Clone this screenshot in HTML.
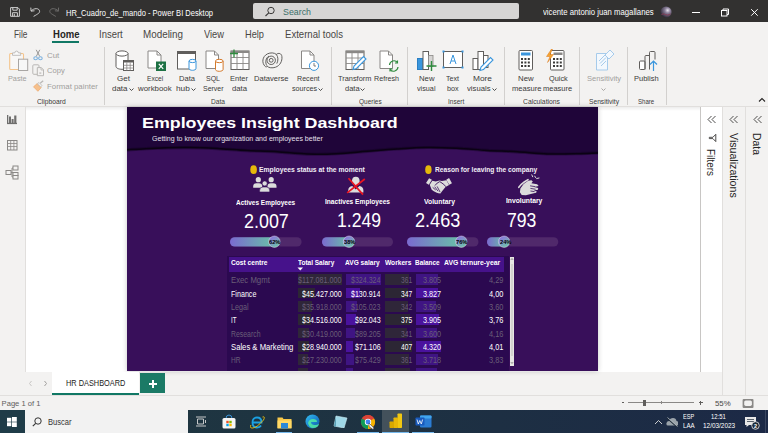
<!DOCTYPE html>
<html><head><meta charset="utf-8">
<style>
*{margin:0;padding:0;box-sizing:border-box}
html,body{width:768px;height:433px;overflow:hidden;background:#f3f2f1;font-family:"Liberation Sans",sans-serif;position:relative}
.a{position:absolute;display:block}
.t{position:absolute;white-space:nowrap;line-height:1}
</style></head><body>
<div class="a" style="left:0px;top:0px;width:768px;height:22px;background:#323130;"></div>
<div class="a" style="left:0px;top:22px;width:768px;height:85px;background:#f3f2f1;"></div>
<div class="a" style="left:0px;top:106px;width:768px;height:1px;background:#e1dfdd;"></div>
<div class="a" style="left:0px;top:107px;width:25px;height:289px;background:#f3f2f1;"></div>
<div class="a" style="left:25px;top:107px;width:1px;height:265px;background:#e1dfdd;"></div>
<div class="a" style="left:26px;top:107px;width:674px;height:265px;background:#ffffff;"></div>
<div class="a" style="left:0px;top:372px;width:700px;height:24px;background:#f3f2f1;"></div>
<div class="a" style="left:700px;top:107px;width:1px;height:265px;background:#c8c6c4;"></div>
<div class="a" style="left:701px;top:107px;width:21px;height:265px;background:#ffffff;"></div>
<div class="a" style="left:701px;top:372px;width:21px;height:24px;background:#f3f2f1;"></div>
<div class="a" style="left:722px;top:107px;width:24px;height:289px;background:#f3f2f1;"></div>
<div class="a" style="left:722px;top:107px;width:1px;height:289px;background:#e1dfdd;"></div>
<div class="a" style="left:745px;top:107px;width:1px;height:289px;background:#e1dfdd;"></div>
<div class="a" style="left:0px;top:395px;width:768px;height:15px;background:#f3f2f1;"></div>
<div class="a" style="left:0px;top:395px;width:768px;height:1px;background:#e1dfdd;"></div>
<div class="a" style="left:0px;top:410px;width:768px;height:23px;background:linear-gradient(90deg,#1f3742 0%,#1e3441 35%,#1d2f43 65%,#1c2946 100%);"></div>
<svg class="a" style="left:0;top:0" width="70" height="22" viewBox="0 0 70 22"><g fill="none" stroke="#d0d0d0" stroke-width="1"><path d="M10.6 7.6h7.3l1.5 1.5v7.2h-8.8z"/><path d="M12.8 7.6v2.6h4.4v-2.6M12.6 16.3v-3.6h4.8v3.6"/><path d="M14.3 13.8v2.4"/></g><g fill="none" stroke="#d0d0d0" stroke-width="1"><path d="M30.8 7.6l.3 3.5l3.4-.3"/><path d="M31.1 11.1C33.5 8 39.6 7.5 39.6 11.6C39.6 12.8 38.5 13.6 33.6 16.4"/></g><g fill="none" stroke="#6c6b6a" stroke-width="1"><path d="M58.6 7.6l-.3 3.5l-3.4-.3"/><path d="M58.3 11.1C55.9 8 49.8 7.5 49.8 11.6C49.8 12.8 50.9 13.6 55.8 16.4"/></g></svg>
<div class="t" style="left:65.80px;top:9.39px;font-size:8.4px;color:#ffffff;font-weight:normal;transform:scaleX(0.9026);transform-origin:0 0;">HR_Cuadro_de_mando - Power BI Desktop</div>
<div class="a" style="left:253px;top:3px;width:266px;height:16px;background:#d6d5d4;border-radius:2px;"></div>
<svg class="a" style="left:264px;top:6px;" width="12" height="11" viewBox="0 0 12 11"><circle cx="7" cy="4.5" r="3.2" fill="none" stroke="#3b3a39" stroke-width="1"/><path d="M4.8 6.8L1.5 10" stroke="#3b3a39" stroke-width="1.1"/></svg>
<div class="t" style="left:283.00px;top:8.32px;font-size:8.6px;color:#3c6f6a;font-weight:normal;transform:scaleX(1.0276);transform-origin:0 0;">Search</div>
<div class="t" style="left:543.00px;top:7.60px;font-size:8.5px;color:#ffffff;font-weight:normal;transform:scaleX(0.9108);transform-origin:0 0;">vicente antonio juan magallanes</div>
<svg class="a" style="left:660px;top:6px;" width="12" height="12" viewBox="0 0 12 12"><defs><radialGradient id="av" cx="65%" cy="35%" r="70%"><stop offset="0" stop-color="#e8e4ee"/><stop offset="0.35" stop-color="#8a7f99"/><stop offset="1" stop-color="#2b2633"/></radialGradient></defs><circle cx="6" cy="6" r="5.6" fill="url(#av)"/><path d="M1.5 8.5q2-1.5 4 0q2 1.5 5-.5" stroke="#8a3a55" stroke-width="0.9" fill="none"/></svg>
<div class="a" style="left:692px;top:12px;width:8px;height:1px;background:#ffffff;"></div>
<svg class="a" style="left:720px;top:8px;" width="10" height="10" viewBox="0 0 10 10"><rect x="1.5" y="2.5" width="5.5" height="5.5" fill="none" stroke="#fff" stroke-width="1"/><path d="M3 2.5v-1.5h5.5v5.5h-1.5" fill="none" stroke="#fff" stroke-width="1"/></svg>
<svg class="a" style="left:750px;top:8px;" width="9" height="9" viewBox="0 0 9 9"><path d="M1.2 1.2l6.5 6.5M7.7 1.2l-6.5 6.5" stroke="#fff" stroke-width="1"/></svg>
<div class="t" style="left:13.60px;top:28.93px;font-size:10.6px;color:#484644;font-weight:normal;transform:scaleX(0.7846);transform-origin:0 0;">File</div>
<div class="t" style="left:52.50px;top:28.93px;font-size:10.6px;color:#252423;font-weight:bold;transform:scaleX(0.8998);transform-origin:0 0;">Home</div>
<div class="t" style="left:98.75px;top:28.93px;font-size:10.6px;color:#484644;font-weight:normal;transform:scaleX(0.8959);transform-origin:0 0;">Insert</div>
<div class="t" style="left:143.00px;top:28.93px;font-size:10.6px;color:#484644;font-weight:normal;transform:scaleX(0.9299);transform-origin:0 0;">Modeling</div>
<div class="t" style="left:204.00px;top:28.93px;font-size:10.6px;color:#484644;font-weight:normal;transform:scaleX(0.8779);transform-origin:0 0;">View</div>
<div class="t" style="left:245.00px;top:28.93px;font-size:10.6px;color:#484644;font-weight:normal;transform:scaleX(0.8716);transform-origin:0 0;">Help</div>
<div class="t" style="left:285.00px;top:28.93px;font-size:10.6px;color:#484644;font-weight:normal;transform:scaleX(0.9031);transform-origin:0 0;">External tools</div>
<div class="a" style="left:52px;top:41px;width:27px;height:2px;background:#117865;"></div>
<div class="a" style="left:104px;top:47px;width:1px;height:58px;background:#d2d0ce;"></div>
<div class="a" style="left:331px;top:47px;width:1px;height:58px;background:#d2d0ce;"></div>
<div class="a" style="left:407px;top:47px;width:1px;height:58px;background:#d2d0ce;"></div>
<div class="a" style="left:504px;top:47px;width:1px;height:58px;background:#d2d0ce;"></div>
<div class="a" style="left:579px;top:47px;width:1px;height:58px;background:#d2d0ce;"></div>
<div class="a" style="left:627px;top:47px;width:1px;height:58px;background:#d2d0ce;"></div>
<div class="a" style="left:666px;top:47px;width:1px;height:58px;background:#d2d0ce;"></div>
<svg class="a" style="left:8px;top:49px;" width="22" height="23" viewBox="0 0 22 23"><rect x="1.7" y="4.5" width="13.8" height="16" rx="1" fill="#f8f7f6" stroke="#f4c48c" stroke-width="1.1"/><path d="M4.5 6.3v-2.4h2.3a1.8 1.8 0 0 1 3.6 0h2.3v2.4z" fill="#fafafa" stroke="#b9b7b5" stroke-width="0.9"/><rect x="10.5" y="10.2" width="9.2" height="11.3" fill="#f7f7f7" stroke="#a8a6a4" stroke-width="1"/></svg>
<div class="t" style="left:7.70px;top:74.60px;font-size:7.8px;color:#a19f9d;font-weight:normal;transform:scaleX(0.9325);transform-origin:0 0;">Paste</div>
<svg class="a" style="left:33px;top:49px;" width="10" height="12" viewBox="0 0 10 12"><path d="M3.2 7.5L6.8 0.8M6.8 7.5L3.2 0.8" stroke="#8f8d8b" stroke-width="0.9"/><ellipse cx="2.6" cy="9.3" rx="1.8" ry="1.5" fill="none" stroke="#7eb2df" stroke-width="1.1"/><ellipse cx="7.4" cy="9.3" rx="1.8" ry="1.5" fill="none" stroke="#7eb2df" stroke-width="1.1"/></svg>
<div class="t" style="left:46.60px;top:51.80px;font-size:7.8px;color:#a19f9d;font-weight:normal;transform:scaleX(1.0134);transform-origin:0 0;">Cut</div>
<svg class="a" style="left:32px;top:64px;" width="13" height="13" viewBox="0 0 13 13"><rect x="0.8" y="0.8" width="6.2" height="9.5" rx="1" fill="#f3f2f1" stroke="#b9b7b5" stroke-width="1"/><path d="M5.3 3.6h4l2.2 2.2v5.9h-6.2z" fill="#f3f2f1" stroke="#b9b7b5" stroke-width="1"/><path d="M9 3.6v2.4h2.4" fill="none" stroke="#b9b7b5" stroke-width="0.8"/><rect x="7.3" y="8.3" width="2" height="1.6" fill="#c8c6c4"/></svg>
<div class="t" style="left:46.60px;top:67.40px;font-size:7.8px;color:#a19f9d;font-weight:normal;transform:scaleX(0.9721);transform-origin:0 0;">Copy</div>
<svg class="a" style="left:32px;top:80px;" width="13" height="12" viewBox="0 0 13 12"><path d="M1.5 6.8l3.7-3.2l4 4l-3.3 3.7z" fill="#f6c08c" stroke="#eea868" stroke-width="0.7"/><path d="M5.4 3.8l1.6-1.3l2.9 2.9l-1.2 1.6z" fill="#f3f2f1" stroke="#b9b7b5" stroke-width="0.8"/><path d="M8.2 3.2l3-2.4" stroke="#b9b7b5" stroke-width="1.3"/></svg>
<div class="t" style="left:46.60px;top:82.90px;font-size:7.8px;color:#a19f9d;font-weight:normal;transform:scaleX(1.0056);transform-origin:0 0;">Format painter</div>
<div class="t" style="left:37.00px;top:98.20px;font-size:7.8px;color:#3b3a39;font-weight:normal;transform:scaleX(0.8627);transform-origin:0 0;">Clipboard</div>
<svg class="a" style="left:114px;top:50px;" width="21" height="22" viewBox="0 0 21 22"><path d="M2 3.5v13c0 1.6 2.8 2.8 6 2.8s6-1.2 6-2.8v-13" fill="#fff" stroke="#605e5c" stroke-width="1"/><ellipse cx="8" cy="3.5" rx="6" ry="2.6" fill="#fff" stroke="#605e5c" stroke-width="1"/><rect x="9.5" y="10.5" width="10" height="10" fill="#fff" stroke="#605e5c" stroke-width="1"/><rect x="9.5" y="10.5" width="10" height="2" fill="#605e5c"/><path d="M9.5 15.3h10M9.5 18h10M12.8 12.5v8M16.2 12.5v8" stroke="#8a8886" stroke-width="0.8"/></svg>
<div class="t" style="left:117.00px;top:74.60px;font-size:7.8px;color:#3b3a39;font-weight:normal;transform:scaleX(1.0341);transform-origin:0 0;">Get</div>
<div class="t" style="left:112.00px;top:85.40px;font-size:7.8px;color:#3b3a39;font-weight:normal;transform:scaleX(1.0211);transform-origin:0 0;">data</div>
<svg class="a" style="left:128.5px;top:88.39999999999999px;" width="5" height="3" viewBox="0 0 5 3"><path d="M0.5 0.5l2 2l2-2" fill="none" stroke="#3b3a39" stroke-width="0.9"/></svg>
<svg class="a" style="left:147px;top:50px;" width="20" height="22" viewBox="0 0 20 22"><path d="M1 1h9l4 4v13h-13z" fill="#fff" stroke="#8a8886" stroke-width="1"/><path d="M10 1v4h4" fill="none" stroke="#8a8886" stroke-width="1"/><rect x="9" y="11.5" width="10" height="9.5" fill="#1d7144"/><path d="M11.8 13.8l4.4 5M16.2 13.8l-4.4 5" stroke="#fff" stroke-width="1.2"/></svg>
<div class="t" style="left:146.60px;top:74.60px;font-size:7.8px;color:#3b3a39;font-weight:normal;transform:scaleX(0.8493);transform-origin:0 0;">Excel</div>
<div class="t" style="left:137.50px;top:85.40px;font-size:7.8px;color:#3b3a39;font-weight:normal;transform:scaleX(1.0066);transform-origin:0 0;">workbook</div>
<svg class="a" style="left:176px;top:50px;" width="22" height="22" viewBox="0 0 22 22"><rect x="1.5" y="1.5" width="18" height="17.5" fill="#fff" stroke="#605e5c" stroke-width="1"/><rect x="1.5" y="1.5" width="18" height="2.5" fill="#605e5c"/><path d="M13 11v7.5c0 1 1.6 1.8 3.5 1.8s3.5-.8 3.5-1.8v-7.5" fill="#fff" stroke="#3a96dd" stroke-width="1"/><ellipse cx="16.5" cy="11" rx="3.5" ry="1.6" fill="#fff" stroke="#3a96dd" stroke-width="1"/></svg>
<div class="t" style="left:179.00px;top:74.60px;font-size:7.8px;color:#3b3a39;font-weight:normal;transform:scaleX(0.9712);transform-origin:0 0;">Data</div>
<div class="t" style="left:176.00px;top:85.40px;font-size:7.8px;color:#3b3a39;font-weight:normal;transform:scaleX(1.0605);transform-origin:0 0;">hub</div>
<svg class="a" style="left:190.8px;top:88.39999999999999px;" width="5" height="3" viewBox="0 0 5 3"><path d="M0.5 0.5l2 2l2-2" fill="none" stroke="#3b3a39" stroke-width="0.9"/></svg>
<svg class="a" style="left:205px;top:50px;" width="20" height="22" viewBox="0 0 20 22"><path d="M1 1h8.5l4 4v13.5h-12.5z" fill="#fff" stroke="#8a8886" stroke-width="1"/><path d="M9.5 1v4h4" fill="none" stroke="#8a8886" stroke-width="1"/><path d="M10.5 11v8.5c0 1 1.7 1.8 3.8 1.8s3.8-.8 3.8-1.8v-8.5" fill="#fff" stroke="#d47a2c" stroke-width="1"/><ellipse cx="14.3" cy="11" rx="3.8" ry="1.7" fill="#fff" stroke="#d47a2c" stroke-width="1"/></svg>
<div class="t" style="left:206.00px;top:74.60px;font-size:7.8px;color:#3b3a39;font-weight:normal;transform:scaleX(0.8970);transform-origin:0 0;">SQL</div>
<div class="t" style="left:202.50px;top:85.40px;font-size:7.8px;color:#3b3a39;font-weight:normal;transform:scaleX(0.8924);transform-origin:0 0;">Server</div>
<svg class="a" style="left:229px;top:49px;" width="21" height="22" viewBox="0 0 21 22"><rect x="2" y="2" width="18" height="18.5" fill="#fff" stroke="#605e5c" stroke-width="1"/><rect x="2" y="2" width="18" height="2" fill="#8a8886"/><path d="M2 8.5h18M2 14.5h18M8 4v16.5M14 4v16.5" stroke="#8a8886" stroke-width="0.9"/><path d="M5 0.5v8M1 4.5h8" stroke="#2e8b3e" stroke-width="1.3"/></svg>
<div class="t" style="left:230.00px;top:74.60px;font-size:7.8px;color:#3b3a39;font-weight:normal;transform:scaleX(0.9656);transform-origin:0 0;">Enter</div>
<div class="t" style="left:232.00px;top:85.40px;font-size:7.8px;color:#3b3a39;font-weight:normal;transform:scaleX(0.9882);transform-origin:0 0;">data</div>
<svg class="a" style="left:256px;top:46px" width="32" height="28" viewBox="256 46 32 28"><g fill="none" stroke="#5a5856" stroke-width="0.95"><path d="M265.2,66.4 C261.6,63.2 262,56.6 267.4,53.9 C270.6,52.4 274.2,52.6 276.3,54.4 C278.6,52.5 281.6,53.4 281.9,56.6 C282.4,61.2 280,65.6 275.6,67.2 C272.2,68.4 268.8,67.8 267.2,66.3 C266.6,67 265.8,67 265.2,66.4 Z"/><circle cx="271.2" cy="60.3" r="4.2"/><circle cx="271.2" cy="60.3" r="1.9"/><path d="M266.8,65.6 C265,62.6 265.6,57.8 269,56.1 M276.3,54.4 C278.3,56.8 278.4,60.6 276.8,63.6"/></g></svg>
<div class="t" style="left:253.80px;top:74.60px;font-size:7.8px;color:#3b3a39;font-weight:normal;transform:scaleX(0.9734);transform-origin:0 0;">Dataverse</div>
<svg class="a" style="left:300px;top:50px;" width="21" height="22" viewBox="0 0 21 22"><path d="M1.5 1h8.5l4 4v13.5h-12.5z" fill="#fff" stroke="#8a8886" stroke-width="1"/><path d="M10 1v4h4" fill="none" stroke="#8a8886" stroke-width="1"/><circle cx="14" cy="15.8" r="4.6" fill="#fff" stroke="#3a96dd" stroke-width="1"/><path d="M14 13v3h2" fill="none" stroke="#605e5c" stroke-width="0.8"/></svg>
<div class="t" style="left:296.70px;top:74.60px;font-size:7.8px;color:#3b3a39;font-weight:normal;transform:scaleX(0.9145);transform-origin:0 0;">Recent</div>
<div class="t" style="left:291.70px;top:85.40px;font-size:7.8px;color:#3b3a39;font-weight:normal;transform:scaleX(0.9191);transform-origin:0 0;">sources</div>
<svg class="a" style="left:317.8px;top:88.39999999999999px;" width="5" height="3" viewBox="0 0 5 3"><path d="M0.5 0.5l2 2l2-2" fill="none" stroke="#3b3a39" stroke-width="0.9"/></svg>
<svg class="a" style="left:345px;top:50px;" width="22" height="21" viewBox="0 0 22 21"><rect x="1" y="1" width="18" height="18.5" fill="#fff" stroke="#605e5c" stroke-width="1"/><rect x="1" y="1" width="18" height="2.2" fill="#8a8886"/><path d="M1 8h18M1 13.5h18M7 3v16.5M13 3v16.5" stroke="#8a8886" stroke-width="0.9"/><path d="M8 19.5l1-3.5l9.5-9.5l2.5 2.5l-9.5 9.5z" fill="#fff" stroke="#3a96dd" stroke-width="1.1"/></svg>
<div class="t" style="left:211.00px;top:98.20px;font-size:7.8px;color:#3b3a39;font-weight:normal;transform:scaleX(0.8498);transform-origin:0 0;">Data</div>
<div class="t" style="left:338.40px;top:74.60px;font-size:7.8px;color:#3b3a39;font-weight:normal;transform:scaleX(0.9476);transform-origin:0 0;">Transform</div>
<div class="t" style="left:344.50px;top:85.40px;font-size:7.8px;color:#3b3a39;font-weight:normal;transform:scaleX(0.9618);transform-origin:0 0;">data</div>
<svg class="a" style="left:360.1px;top:88.39999999999999px;" width="5" height="3" viewBox="0 0 5 3"><path d="M0.5 0.5l2 2l2-2" fill="none" stroke="#3b3a39" stroke-width="0.9"/></svg>
<svg class="a" style="left:379px;top:50px;" width="22" height="22" viewBox="0 0 22 22"><path d="M1 1h8.5l4 4v13.5h-12.5z" fill="#fff" stroke="#8a8886" stroke-width="1"/><path d="M9.5 1v4h4" fill="none" stroke="#8a8886" stroke-width="1"/><path d="M10.5 15a4.5 4.5 0 0 1 8-2.5M19 17a4.5 4.5 0 0 1-8 2.5" fill="none" stroke="#2e8b3e" stroke-width="1.2"/><path d="M18.5 10.5v2.5h-2.5M11 21.5v-2.5h2.5" fill="none" stroke="#2e8b3e" stroke-width="1.1"/></svg>
<div class="t" style="left:374.40px;top:74.60px;font-size:7.8px;color:#3b3a39;font-weight:normal;transform:scaleX(0.9191);transform-origin:0 0;">Refresh</div>
<div class="t" style="left:358.75px;top:98.20px;font-size:7.8px;color:#3b3a39;font-weight:normal;transform:scaleX(0.8294);transform-origin:0 0;">Queries</div>
<svg class="a" style="left:416px;top:50px;" width="22" height="22" viewBox="0 0 22 22"><rect x="1.5" y="8.5" width="5.5" height="11" fill="#3a96dd" stroke="#2a7fc4" stroke-width="1"/><rect x="7" y="1.5" width="5.5" height="18" fill="#fff" stroke="#605e5c" stroke-width="1"/><rect x="12.5" y="5.5" width="4.5" height="11" fill="#d6d5d4" stroke="#8a8886" stroke-width="0.8"/><path d="M15.5 11v10M10.5 16h10" stroke="#2e8b3e" stroke-width="1.4"/></svg>
<div class="t" style="left:418.50px;top:74.60px;font-size:7.8px;color:#3b3a39;font-weight:normal;transform:scaleX(0.9934);transform-origin:0 0;">New</div>
<div class="t" style="left:416.50px;top:85.40px;font-size:7.8px;color:#3b3a39;font-weight:normal;transform:scaleX(0.9278);transform-origin:0 0;">visual</div>
<svg class="a" style="left:442px;top:50px;" width="22" height="20" viewBox="0 0 22 20"><rect x="1.5" y="1.5" width="19" height="16" fill="#fff" stroke="#605e5c" stroke-width="1"/><rect x="0.5" y="0.5" width="2" height="2" fill="#3a96dd"/><rect x="19.5" y="0.5" width="2" height="2" fill="#3a96dd"/><rect x="0.5" y="16.5" width="2" height="2" fill="#3a96dd"/><rect x="19.5" y="16.5" width="2" height="2" fill="#3a96dd"/><path d="M8 14l3-9l3 9M9 11h4" fill="none" stroke="#3a96dd" stroke-width="1"/></svg>
<div class="t" style="left:446.40px;top:74.60px;font-size:7.8px;color:#3b3a39;font-weight:normal;transform:scaleX(0.9088);transform-origin:0 0;">Text</div>
<div class="t" style="left:447.00px;top:85.40px;font-size:7.8px;color:#3b3a39;font-weight:normal;transform:scaleX(0.9225);transform-origin:0 0;">box</div>
<svg class="a" style="left:472px;top:50px;" width="22" height="22" viewBox="0 0 22 22"><rect x="1" y="8.5" width="5" height="11" fill="#fff" stroke="#605e5c" stroke-width="1"/><rect x="6" y="1.5" width="5.5" height="18" fill="#fff" stroke="#605e5c" stroke-width="1"/><rect x="11.5" y="5.5" width="4.5" height="12" fill="#fff" stroke="#605e5c" stroke-width="1"/><path d="M8 20.5l1-3.5l9.5-9.5l2.5 2.5l-9.5 9.5z" fill="#fff" stroke="#3a96dd" stroke-width="1.1"/></svg>
<div class="t" style="left:473.00px;top:74.60px;font-size:7.8px;color:#3b3a39;font-weight:normal;transform:scaleX(1.0693);transform-origin:0 0;">More</div>
<div class="t" style="left:467.00px;top:85.40px;font-size:7.8px;color:#3b3a39;font-weight:normal;transform:scaleX(0.9857);transform-origin:0 0;">visuals</div>
<svg class="a" style="left:491.5px;top:88.39999999999999px;" width="5" height="3" viewBox="0 0 5 3"><path d="M0.5 0.5l2 2l2-2" fill="none" stroke="#3b3a39" stroke-width="0.9"/></svg>
<div class="t" style="left:447.70px;top:98.20px;font-size:7.8px;color:#3b3a39;font-weight:normal;transform:scaleX(0.8305);transform-origin:0 0;">Insert</div>
<svg class="a" style="left:518px;top:50px;" width="16" height="21" viewBox="0 0 16 21"><rect x="1" y="0.5" width="13.5" height="19.5" rx="1" fill="#fff" stroke="#605e5c" stroke-width="1"/><rect x="3" y="2.5" width="9.5" height="3" fill="#3a96dd"/><rect x="3.0" y="8.0" width="2" height="2" fill="#3b3a39"/><rect x="6.4" y="8.0" width="2" height="2" fill="#3b3a39"/><rect x="9.8" y="8.0" width="2" height="2" fill="#3b3a39"/><rect x="3.0" y="11.5" width="2" height="2" fill="#3b3a39"/><rect x="6.4" y="11.5" width="2" height="2" fill="#3b3a39"/><rect x="9.8" y="11.5" width="2" height="2" fill="#3b3a39"/><rect x="3.0" y="15.0" width="2" height="2" fill="#3b3a39"/><rect x="6.4" y="15.0" width="2" height="2" fill="#3b3a39"/><rect x="9.8" y="15.0" width="2" height="2" fill="#3b3a39"/></svg>
<div class="t" style="left:518.00px;top:74.60px;font-size:7.8px;color:#3b3a39;font-weight:normal;">New</div>
<div class="t" style="left:511.50px;top:85.40px;font-size:7.8px;color:#3b3a39;font-weight:normal;transform:scaleX(0.9722);transform-origin:0 0;">measure</div>
<svg class="a" style="left:546px;top:49px;" width="20" height="23" viewBox="0 0 20 23"><rect x="4.5" y="1.5" width="13.5" height="19.5" rx="1" fill="#fff" stroke="#605e5c" stroke-width="1"/><rect x="7.5" y="3.5" width="9" height="2.5" fill="#8a8886"/><rect x="7.0" y="9.0" width="2" height="2" fill="#3b3a39"/><rect x="10.4" y="9.0" width="2" height="2" fill="#3b3a39"/><rect x="13.8" y="9.0" width="2" height="2" fill="#3b3a39"/><rect x="7.0" y="12.5" width="2" height="2" fill="#3b3a39"/><rect x="10.4" y="12.5" width="2" height="2" fill="#3b3a39"/><rect x="13.8" y="12.5" width="2" height="2" fill="#3b3a39"/><rect x="7.0" y="16.0" width="2" height="2" fill="#3b3a39"/><rect x="10.4" y="16.0" width="2" height="2" fill="#3b3a39"/><rect x="13.8" y="16.0" width="2" height="2" fill="#3b3a39"/><path d="M5.5 0l-5 7.5h3.5l-2.5 6l6-8h-3.5l2.5-5.5z" fill="#f7a531" stroke="#d9781e" stroke-width="0.5"/></svg>
<div class="t" style="left:548.75px;top:74.60px;font-size:7.8px;color:#3b3a39;font-weight:normal;transform:scaleX(0.9404);transform-origin:0 0;">Quick</div>
<div class="t" style="left:542.80px;top:85.40px;font-size:7.8px;color:#3b3a39;font-weight:normal;transform:scaleX(0.9623);transform-origin:0 0;">measure</div>
<div class="t" style="left:523.00px;top:98.20px;font-size:7.8px;color:#3b3a39;font-weight:normal;transform:scaleX(0.8709);transform-origin:0 0;">Calculations</div>
<svg class="a" style="left:595px;top:49px;" width="20" height="22" viewBox="0 0 20 22"><path d="M1.5 4.5h11v16.5h-11z" fill="#f3f8fd" stroke="#a6cbeb" stroke-width="1"/><path d="M4 12l6-6M5 14.5l6-6M6 17l5-5" stroke="#a6cbeb" stroke-width="1"/><path d="M10 6l5-5l4 4l-5 5z" fill="#f3f8fd" stroke="#a6cbeb" stroke-width="1"/></svg>
<div class="t" style="left:586.75px;top:74.60px;font-size:7.8px;color:#a19f9d;font-weight:normal;transform:scaleX(0.9726);transform-origin:0 0;">Sensitivity</div>
<svg class="a" style="left:600.5px;top:87.5px;" width="5" height="3" viewBox="0 0 5 3"><path d="M0.5 0.5l2 2l2-2" fill="none" stroke="#a19f9d" stroke-width="0.9"/></svg>
<div class="t" style="left:588.80px;top:98.20px;font-size:7.8px;color:#3b3a39;font-weight:normal;transform:scaleX(0.8544);transform-origin:0 0;">Sensitivity</div>
<svg class="a" style="left:638px;top:50px;" width="22" height="22" viewBox="0 0 22 22"><rect x="1.5" y="11" width="5.5" height="8.5" rx="1" fill="#fff" stroke="#605e5c" stroke-width="1"/><path d="M7 19.5v-13a1 1 0 0 1 1-1h3.5" fill="none" stroke="#605e5c" stroke-width="1"/><path d="M11.5 19.5v-17a1 1 0 0 1 1-1h3.5a1 1 0 0 1 1 1v7" fill="none" stroke="#605e5c" stroke-width="1"/><path d="M15.5 21v-10M12 14.5l3.5-3.5l3.5 3.5" fill="none" stroke="#3a96dd" stroke-width="1.2"/></svg>
<div class="t" style="left:634.40px;top:74.60px;font-size:7.8px;color:#3b3a39;font-weight:normal;transform:scaleX(0.9616);transform-origin:0 0;">Publish</div>
<div class="t" style="left:638.30px;top:98.20px;font-size:7.8px;color:#3b3a39;font-weight:normal;transform:scaleX(0.7784);transform-origin:0 0;">Share</div>
<svg class="a" style="left:758px;top:97px;" width="8" height="6" viewBox="0 0 8 6"><path d="M1 4.5l3-3l3 3" fill="none" stroke="#252423" stroke-width="1.1"/></svg>
<div class="a" style="left:127px;top:107px;width:471px;height:264px;background:#380f5a;box-shadow:0 0 5px rgba(0,0,0,0.22);"></div>
<div class="a" style="left:26px;top:107px;width:674px;height:4px;background:linear-gradient(rgba(0,0,0,0.07),rgba(0,0,0,0));"></div>
<svg class="a" style="left:127px;top:107px;" width="471" height="60" viewBox="0 0 471 60"><defs><filter id="bl" x="-5%" y="-50%" width="110%" height="200%"><feGaussianBlur stdDeviation="0.9"/></filter></defs><path d="M-2,42.9 C-1.7,42.9 -5.3,43.1 0.0,42.8 C5.3,42.5 20.0,41.6 30.0,41.2 C40.0,40.9 50.0,40.5 60.0,40.6 C70.0,40.7 80.0,41.1 90.0,41.6 C100.0,42.1 110.0,43.1 120.0,43.6 C130.0,44.1 140.0,44.2 150.0,44.8 C160.0,45.4 170.0,46.8 180.0,47.1 C190.0,47.4 200.0,47.2 210.0,46.7 C220.0,46.2 230.0,45.1 240.0,44.3 C250.0,43.5 260.0,42.5 270.0,41.9 C280.0,41.3 290.0,40.6 300.0,40.5 C310.0,40.4 320.0,40.8 330.0,41.2 C340.0,41.7 350.0,42.8 360.0,43.4 C370.0,44.0 380.0,44.2 390.0,44.8 C400.0,45.4 410.0,46.6 420.0,46.9 C430.0,47.2 441.5,46.9 450.0,46.7 C458.5,46.5 467.2,46.0 471.0,45.9 C474.8,45.8 472.7,45.8 473.0,45.8 L473,-2 L-2,-2 Z" fill="#1f0539"/><path d="M-2,42.9 C-1.7,42.9 -5.3,43.1 0.0,42.8 C5.3,42.5 20.0,41.6 30.0,41.2 C40.0,40.9 50.0,40.5 60.0,40.6 C70.0,40.7 80.0,41.1 90.0,41.6 C100.0,42.1 110.0,43.1 120.0,43.6 C130.0,44.1 140.0,44.2 150.0,44.8 C160.0,45.4 170.0,46.8 180.0,47.1 C190.0,47.4 200.0,47.2 210.0,46.7 C220.0,46.2 230.0,45.1 240.0,44.3 C250.0,43.5 260.0,42.5 270.0,41.9 C280.0,41.3 290.0,40.6 300.0,40.5 C310.0,40.4 320.0,40.8 330.0,41.2 C340.0,41.7 350.0,42.8 360.0,43.4 C370.0,44.0 380.0,44.2 390.0,44.8 C400.0,45.4 410.0,46.6 420.0,46.9 C430.0,47.2 441.5,46.9 450.0,46.7 C458.5,46.5 467.2,46.0 471.0,45.9 C474.8,45.8 472.7,45.8 473.0,45.8" fill="none" stroke="#12041f" stroke-opacity="0.45" stroke-width="3.2"/><path d="M-2,42.9 C-1.7,42.9 -5.3,43.1 0.0,42.8 C5.3,42.5 20.0,41.6 30.0,41.2 C40.0,40.9 50.0,40.5 60.0,40.6 C70.0,40.7 80.0,41.1 90.0,41.6 C100.0,42.1 110.0,43.1 120.0,43.6 C130.0,44.1 140.0,44.2 150.0,44.8 C160.0,45.4 170.0,46.8 180.0,47.1 C190.0,47.4 200.0,47.2 210.0,46.7 C220.0,46.2 230.0,45.1 240.0,44.3 C250.0,43.5 260.0,42.5 270.0,41.9 C280.0,41.3 290.0,40.6 300.0,40.5 C310.0,40.4 320.0,40.8 330.0,41.2 C340.0,41.7 350.0,42.8 360.0,43.4 C370.0,44.0 380.0,44.2 390.0,44.8 C400.0,45.4 410.0,46.6 420.0,46.9 C430.0,47.2 441.5,46.9 450.0,46.7 C458.5,46.5 467.2,46.0 471.0,45.9 C474.8,45.8 472.7,45.8 473.0,45.8" fill="none" stroke="#0b0214" stroke-width="1.5"/></svg>
<div class="t" style="left:141.60px;top:114.96px;font-size:15.4px;color:#ffffff;font-weight:bold;transform:scaleX(1.1587);transform-origin:0 0;">Employees Insight Dashboard</div>
<div class="t" style="left:151.80px;top:135.61px;font-size:6.6px;color:#e6e0ec;font-weight:normal;transform:scaleX(1.0665);transform-origin:0 0;">Getting to know our organization and employees better</div>
<svg class="a" style="left:250px;top:165px;" width="8" height="10" viewBox="0 0 8 10"><ellipse cx="3.6" cy="4.7" rx="3.3" ry="4.4" fill="#e5b80b"/></svg>
<div class="t" style="left:258.70px;top:166.27px;font-size:7.6px;color:#f2eef6;font-weight:bold;transform:scaleX(0.8924);transform-origin:0 0;">Employees status at the moment</div>
<svg class="a" style="left:425px;top:165px;" width="8" height="10" viewBox="0 0 8 10"><ellipse cx="3.4" cy="4.7" rx="3.2" ry="4.4" fill="#e5b80b"/></svg>
<div class="t" style="left:434.70px;top:166.27px;font-size:7.6px;color:#f2eef6;font-weight:bold;transform:scaleX(0.8745);transform-origin:0 0;">Reason for leaving the company</div>
<svg class="a" style="left:252px;top:176px;" width="26" height="18" viewBox="0 0 26 18"><g fill="#dcdcdc"><circle cx="6.3" cy="3.7" r="2.6"/><circle cx="19.2" cy="3.7" r="2.6"/><path d="M1.2 11.7v-1.2q0-3.2 3.2-3.2h2.6q3.2 0 3.2 3.2v1.2z"/><path d="M15.5 11.7v-1.2q0-3.2 3.2-3.2h2.6q3.2 0 3.2 3.2v1.2z"/><circle cx="12.7" cy="7.4" r="2.5" stroke="#380f5a" stroke-width="0.6"/><path d="M7.6 16v-1.6q0-3.4 3.4-3.4h3.3q3.4 0 3.4 3.4v1.6z" stroke="#380f5a" stroke-width="0.6"/></g></svg>
<svg class="a" style="left:346px;top:176px;" width="20" height="20" viewBox="0 0 20 20"><g fill="#dcdcdc"><ellipse cx="9.8" cy="5" rx="3.8" ry="4.3"/><path d="M2.2 16.5v-2q0-4 4-4.5l3.6 3.5l3.6-3.5q4 .5 4 4.5v2z"/></g><path d="M2.5 2.3L17 18.6M18.8 3L1.1 16.9" stroke="#ea1520" stroke-width="1.7"/></svg>
<svg class="a" style="left:0;top:0" width="768" height="433" viewBox="0 0 768 433"><polygon points="426.01,183.11 429.13,178.19 431.89,179.81 428.83,184.79" fill="#dcdcdc"/><polygon points="446.25,179.69 449.07,178.01 451.95,183.17 449.25,184.85" fill="#dcdcdc"/><polygon points="429.73,184.79 432.31,180.71 435.74,181.61 439.52,180.41 441.92,180.89 446.43,180.23 449.07,184.91 445.53,186.89 442.22,191.10 440.42,193.62 438.32,193.14 436.22,192.42 433.81,191.22 431.71,189.72 430.81,187.62" fill="#dcdcdc"/><polyline points="435.02,185.51 437.12,183.11 439.82,181.61 443.72,184.31 445.83,186.71" fill="none" stroke="#380f5a" stroke-width="0.9"/><polyline points="432.61,187.32 435.74,190.02" fill="none" stroke="#380f5a" stroke-width="0.8"/><polyline points="434.71,186.71 438.02,191.22" fill="none" stroke="#380f5a" stroke-width="0.8"/><polyline points="437.12,186.41 440.12,192.12" fill="none" stroke="#380f5a" stroke-width="0.8"/></svg>
<svg class="a" style="left:0;top:0" width="768" height="433" viewBox="0 0 768 433"><g><polygon points="520.40,188.42 523.64,183.90 528.16,180.86 531.39,180.21 532.81,181.51 531.39,183.25 537.21,184.35 538.63,186.03 534.30,186.94 538.18,187.97 537.99,189.72 533.65,190.56 536.89,191.46 536.05,192.75 530.75,194.05 525.90,195.34 521.70,195.08 519.89,192.30" fill="#dcdcdc"/><polyline points="518.79,187.32 521.05,184.54 524.28,181.96 528.03,179.57" fill="none" stroke="#dcdcdc" stroke-width="1.6" stroke-linecap="round"/><polyline points="530.10,185.84 535.27,186.68" fill="none" stroke="#380f5a" stroke-width="0.8"/><polyline points="530.42,188.42 535.59,189.26" fill="none" stroke="#380f5a" stroke-width="0.8"/><polyline points="530.42,191.01 534.62,191.65" fill="none" stroke="#380f5a" stroke-width="0.8"/><polyline points="531.84,174.85 532.69,176.79" fill="none" stroke="#dcdcdc" stroke-width="1" stroke-linecap="round"/><polyline points="534.75,176.14 535.66,177.56" fill="none" stroke="#dcdcdc" stroke-width="1" stroke-linecap="round"/><polyline points="536.69,178.53 539.02,178.02" fill="none" stroke="#dcdcdc" stroke-width="1" stroke-linecap="round"/></g></svg>
<div class="t" style="left:236.00px;top:199.27px;font-size:7.0px;color:#ffffff;font-weight:bold;transform:scaleX(0.9261);transform-origin:0 0;">Actives Employees</div>
<div class="t" style="left:325.00px;top:197.87px;font-size:7.0px;color:#ffffff;font-weight:bold;transform:scaleX(0.9437);transform-origin:0 0;">Inactives Employees</div>
<div class="t" style="left:424.00px;top:197.87px;font-size:7.0px;color:#ffffff;font-weight:bold;transform:scaleX(0.9758);transform-origin:0 0;">Voluntary</div>
<div class="t" style="left:505.50px;top:197.47px;font-size:7.0px;color:#ffffff;font-weight:bold;transform:scaleX(0.9620);transform-origin:0 0;">Involuntary</div>
<div class="t" style="left:244.30px;top:211.37px;font-size:20px;color:#ffffff;font-weight:normal;transform:scaleX(0.8951);transform-origin:0 0;">2.007</div>
<div class="t" style="left:336.50px;top:210.47px;font-size:20px;color:#ffffff;font-weight:normal;transform:scaleX(0.8791);transform-origin:0 0;">1.249</div>
<div class="t" style="left:414.50px;top:210.47px;font-size:20px;color:#ffffff;font-weight:normal;transform:scaleX(0.9051);transform-origin:0 0;">2.463</div>
<div class="t" style="left:506.60px;top:210.47px;font-size:20px;color:#ffffff;font-weight:normal;transform:scaleX(0.8810);transform-origin:0 0;">793</div>
<svg class="a" style="left:229px;top:234px;" width="79.60000000000002" height="15" viewBox="0 0 79.60000000000002 15"><defs><linearGradient id="g1" x1="0" x2="1"><stop offset="0" stop-color="#7b6ad0"/><stop offset="1" stop-color="#68c3a6"/></linearGradient><linearGradient id="k1" x1="0" y1="0" x2="0.7" y2="1"><stop offset="0.2" stop-color="#8b78dc"/><stop offset="1" stop-color="#6cc6a8"/></linearGradient></defs><rect x="1" y="3.2" width="71.60000000000002" height="9.4" rx="4.7" fill="#50296b"/><rect x="1" y="3.2" width="45.4" height="9.4" rx="4.7" fill="url(#g1)"/><circle cx="45.4" cy="7.7" r="5.7" fill="url(#k1)" stroke="#e8e0f0" stroke-opacity="0.8" stroke-width="0.6"/></svg>
<div class="t" style="left:269.49px;top:239.05px;font-size:6.2px;color:#000000;font-weight:bold;transform:scaleX(0.9187);transform-origin:0 0;">62%</div>
<svg class="a" style="left:321px;top:234px;" width="79" height="15" viewBox="0 0 79 15"><defs><linearGradient id="g2" x1="0" x2="1"><stop offset="0" stop-color="#7b6ad0"/><stop offset="1" stop-color="#68c3a6"/></linearGradient><linearGradient id="k2" x1="0" y1="0" x2="0.7" y2="1"><stop offset="0.2" stop-color="#8b78dc"/><stop offset="1" stop-color="#6cc6a8"/></linearGradient></defs><rect x="1" y="3.2" width="71" height="9.4" rx="4.7" fill="#50296b"/><rect x="1" y="3.2" width="28.0" height="9.4" rx="4.7" fill="url(#g2)"/><circle cx="28.0" cy="7.7" r="5.7" fill="url(#k2)" stroke="#e8e0f0" stroke-opacity="0.8" stroke-width="0.6"/></svg>
<div class="t" style="left:344.08px;top:239.05px;font-size:6.2px;color:#000000;font-weight:bold;transform:scaleX(0.9187);transform-origin:0 0;">38%</div>
<svg class="a" style="left:406px;top:234px;" width="79.5" height="15" viewBox="0 0 79.5 15"><defs><linearGradient id="g3" x1="0" x2="1"><stop offset="0" stop-color="#7b6ad0"/><stop offset="1" stop-color="#68c3a6"/></linearGradient><linearGradient id="k3" x1="0" y1="0" x2="0.7" y2="1"><stop offset="0.2" stop-color="#8b78dc"/><stop offset="1" stop-color="#6cc6a8"/></linearGradient></defs><rect x="1" y="3.2" width="71.5" height="9.4" rx="4.7" fill="#50296b"/><rect x="1" y="3.2" width="55.3" height="9.4" rx="4.7" fill="url(#g3)"/><circle cx="55.3" cy="7.7" r="5.7" fill="url(#k3)" stroke="#e8e0f0" stroke-opacity="0.8" stroke-width="0.6"/></svg>
<div class="t" style="left:456.44px;top:239.05px;font-size:6.2px;color:#000000;font-weight:bold;transform:scaleX(0.9187);transform-origin:0 0;">76%</div>
<svg class="a" style="left:486.3px;top:234px;" width="79.30000000000001" height="15" viewBox="0 0 79.30000000000001 15"><defs><linearGradient id="g4" x1="0" x2="1"><stop offset="0" stop-color="#7b6ad0"/><stop offset="1" stop-color="#68c3a6"/></linearGradient><linearGradient id="k4" x1="0" y1="0" x2="0.7" y2="1"><stop offset="0.2" stop-color="#8b78dc"/><stop offset="1" stop-color="#6cc6a8"/></linearGradient></defs><rect x="1" y="3.2" width="71.30000000000001" height="9.4" rx="4.7" fill="#50296b"/><rect x="1" y="3.2" width="18.1" height="9.4" rx="4.7" fill="url(#g4)"/><circle cx="18.1" cy="7.7" r="5.7" fill="url(#k4)" stroke="#e8e0f0" stroke-opacity="0.8" stroke-width="0.6"/></svg>
<div class="t" style="left:499.51px;top:239.05px;font-size:6.2px;color:#000000;font-weight:bold;transform:scaleX(0.9187);transform-origin:0 0;">24%</div>
<div class="a" style="left:227px;top:256px;width:282px;height:115px;background:#2b0950;"></div>
<div class="a" style="left:228.5px;top:256.8px;width:275.7px;height:15.7px;background:#46128b;"></div>
<div class="t" style="left:230.50px;top:259.01px;font-size:7.2px;color:#ffffff;font-weight:bold;transform:scaleX(0.9214);transform-origin:0 0;">Cost centre</div>
<div class="t" style="left:297.70px;top:259.01px;font-size:7.2px;color:#ffffff;font-weight:bold;transform:scaleX(0.9011);transform-origin:0 0;">Total Salary</div>
<svg class="a" style="left:297px;top:267px;" width="7" height="4" viewBox="0 0 7 4"><path d="M0.5 0.5h5.5l-2.75 3z" fill="#fff"/></svg>
<div class="t" style="left:345.10px;top:259.01px;font-size:7.2px;color:#ffffff;font-weight:bold;transform:scaleX(0.9158);transform-origin:0 0;">AVG salary</div>
<div class="t" style="left:384.60px;top:259.01px;font-size:7.2px;color:#ffffff;font-weight:bold;transform:scaleX(0.9205);transform-origin:0 0;">Workers</div>
<div class="t" style="left:415.30px;top:259.01px;font-size:7.2px;color:#ffffff;font-weight:bold;transform:scaleX(0.8944);transform-origin:0 0;">Balance</div>
<div class="t" style="left:444.20px;top:259.01px;font-size:7.2px;color:#ffffff;font-weight:bold;transform:scaleX(0.9528);transform-origin:0 0;">AVG ternure-year</div>
<div class="a" style="left:298px;top:274.2px;width:44.0px;height:10.8px;background:#2f2639;"></div>
<div class="a" style="left:345.7px;top:274.2px;width:35.2px;height:10.8px;background:#3f1483;"></div>
<div class="a" style="left:384.6px;top:274.2px;width:24.21px;height:10.8px;background:#2f2639;"></div>
<div class="a" style="left:415.8px;top:274.2px;width:22.37px;height:10.8px;background:#3f1483;"></div>
<div class="t" style="left:230.60px;top:276.27px;font-size:8.3px;color:#6a5e78;font-weight:normal;transform:scaleX(0.9348);transform-origin:0 0;">Exec Mgmt</div>
<div class="t" style="left:298.36px;top:276.27px;font-size:8.3px;color:#6a5e78;font-weight:normal;transform:scaleX(0.8661);transform-origin:0 0;">$117.081.000</div>
<div class="t" style="left:351.46px;top:276.27px;font-size:8.3px;color:#6a5e78;font-weight:normal;transform:scaleX(0.8505);transform-origin:0 0;">$324.324</div>
<div class="t" style="left:400.80px;top:276.27px;font-size:8.3px;color:#6a5e78;font-weight:normal;transform:scaleX(0.8016);transform-origin:0 0;">361</div>
<div class="t" style="left:423.10px;top:276.27px;font-size:8.3px;color:#6a5e78;font-weight:normal;transform:scaleX(0.8715);transform-origin:0 0;">3.805</div>
<div class="t" style="left:488.60px;top:276.27px;font-size:8.3px;color:#6a5e78;font-weight:normal;transform:scaleX(0.8915);transform-origin:0 0;">4,29</div>
<div class="a" style="left:298px;top:287.55px;width:17.07px;height:10.8px;background:#2c2634;"></div>
<div class="a" style="left:345.7px;top:287.55px;width:14.21px;height:10.8px;background:#4a129e;"></div>
<div class="a" style="left:384.6px;top:287.55px;width:23.28px;height:10.8px;background:#2c2634;"></div>
<div class="a" style="left:415.8px;top:287.55px;width:22.5px;height:10.8px;background:#4a129e;"></div>
<div class="t" style="left:230.60px;top:289.62px;font-size:8.3px;color:#ffffff;font-weight:normal;transform:scaleX(0.8602);transform-origin:0 0;">Finance</div>
<div class="t" style="left:301.98px;top:289.62px;font-size:8.3px;color:#ffffff;font-weight:normal;transform:scaleX(0.8628);transform-origin:0 0;">$45.427.000</div>
<div class="t" style="left:351.46px;top:289.62px;font-size:8.3px;color:#ffffff;font-weight:normal;transform:scaleX(0.8505);transform-origin:0 0;">$130.914</div>
<div class="t" style="left:400.80px;top:289.62px;font-size:8.3px;color:#ffffff;font-weight:normal;transform:scaleX(0.8016);transform-origin:0 0;">347</div>
<div class="t" style="left:423.10px;top:289.62px;font-size:8.3px;color:#ffffff;font-weight:normal;transform:scaleX(0.8715);transform-origin:0 0;">3.827</div>
<div class="t" style="left:488.60px;top:289.62px;font-size:8.3px;color:#ffffff;font-weight:normal;transform:scaleX(0.8915);transform-origin:0 0;">4,00</div>
<div class="a" style="left:298px;top:300.9px;width:13.5px;height:10.8px;background:#2f2639;"></div>
<div class="a" style="left:345.7px;top:300.9px;width:11.4px;height:10.8px;background:#3f1483;"></div>
<div class="a" style="left:384.6px;top:300.9px;width:22.94px;height:10.8px;background:#2f2639;"></div>
<div class="a" style="left:415.8px;top:300.9px;width:20.63px;height:10.8px;background:#3f1483;"></div>
<div class="t" style="left:230.60px;top:302.97px;font-size:8.3px;color:#6a5e78;font-weight:normal;transform:scaleX(0.8618);transform-origin:0 0;">Legal</div>
<div class="t" style="left:301.98px;top:302.97px;font-size:8.3px;color:#6a5e78;font-weight:normal;transform:scaleX(0.8628);transform-origin:0 0;">$35.918.000</div>
<div class="t" style="left:351.46px;top:302.97px;font-size:8.3px;color:#6a5e78;font-weight:normal;transform:scaleX(0.8505);transform-origin:0 0;">$105.023</div>
<div class="t" style="left:400.80px;top:302.97px;font-size:8.3px;color:#6a5e78;font-weight:normal;transform:scaleX(0.8016);transform-origin:0 0;">342</div>
<div class="t" style="left:423.10px;top:302.97px;font-size:8.3px;color:#6a5e78;font-weight:normal;transform:scaleX(0.8715);transform-origin:0 0;">3.509</div>
<div class="t" style="left:488.60px;top:302.97px;font-size:8.3px;color:#6a5e78;font-weight:normal;transform:scaleX(0.8915);transform-origin:0 0;">3,60</div>
<div class="a" style="left:298px;top:314.25px;width:12.97px;height:10.8px;background:#2c2634;"></div>
<div class="a" style="left:345.7px;top:314.25px;width:9.99px;height:10.8px;background:#4a129e;"></div>
<div class="a" style="left:384.6px;top:314.25px;width:25.15px;height:10.8px;background:#2c2634;"></div>
<div class="a" style="left:415.8px;top:314.25px;width:22.96px;height:10.8px;background:#4a129e;"></div>
<div class="t" style="left:230.60px;top:316.32px;font-size:8.3px;color:#ffffff;font-weight:normal;transform:scaleX(0.7456);transform-origin:0 0;">IT</div>
<div class="t" style="left:301.98px;top:316.32px;font-size:8.3px;color:#ffffff;font-weight:normal;transform:scaleX(0.8628);transform-origin:0 0;">$34.516.000</div>
<div class="t" style="left:355.14px;top:316.32px;font-size:8.3px;color:#ffffff;font-weight:normal;transform:scaleX(0.8587);transform-origin:0 0;">$92.043</div>
<div class="t" style="left:400.80px;top:316.32px;font-size:8.3px;color:#ffffff;font-weight:normal;transform:scaleX(0.8016);transform-origin:0 0;">375</div>
<div class="t" style="left:423.10px;top:316.32px;font-size:8.3px;color:#ffffff;font-weight:normal;transform:scaleX(0.8715);transform-origin:0 0;">3.905</div>
<div class="t" style="left:488.60px;top:316.32px;font-size:8.3px;color:#ffffff;font-weight:normal;transform:scaleX(0.8915);transform-origin:0 0;">3,76</div>
<div class="a" style="left:298px;top:327.6px;width:11.43px;height:10.8px;background:#2f2639;"></div>
<div class="a" style="left:345.7px;top:327.6px;width:9.68px;height:10.8px;background:#3f1483;"></div>
<div class="a" style="left:384.6px;top:327.6px;width:22.87px;height:10.8px;background:#2f2639;"></div>
<div class="a" style="left:415.8px;top:327.6px;width:21.17px;height:10.8px;background:#3f1483;"></div>
<div class="t" style="left:230.60px;top:329.67px;font-size:8.3px;color:#6a5e78;font-weight:normal;transform:scaleX(0.8305);transform-origin:0 0;">Research</div>
<div class="t" style="left:301.98px;top:329.67px;font-size:8.3px;color:#6a5e78;font-weight:normal;transform:scaleX(0.8628);transform-origin:0 0;">$30.419.000</div>
<div class="t" style="left:355.14px;top:329.67px;font-size:8.3px;color:#6a5e78;font-weight:normal;transform:scaleX(0.8587);transform-origin:0 0;">$89.205</div>
<div class="t" style="left:400.80px;top:329.67px;font-size:8.3px;color:#6a5e78;font-weight:normal;transform:scaleX(0.8016);transform-origin:0 0;">341</div>
<div class="t" style="left:423.10px;top:329.67px;font-size:8.3px;color:#6a5e78;font-weight:normal;transform:scaleX(0.8715);transform-origin:0 0;">3.600</div>
<div class="t" style="left:488.60px;top:329.67px;font-size:8.3px;color:#6a5e78;font-weight:normal;transform:scaleX(0.8915);transform-origin:0 0;">4,16</div>
<div class="a" style="left:298px;top:340.95px;width:10.88px;height:10.8px;background:#2c2634;"></div>
<div class="a" style="left:345.7px;top:340.95px;width:7.72px;height:10.8px;background:#4a129e;"></div>
<div class="a" style="left:384.6px;top:340.95px;width:27.3px;height:10.8px;background:#2c2634;"></div>
<div class="a" style="left:415.8px;top:340.95px;width:25.4px;height:10.8px;background:#4a129e;"></div>
<div class="t" style="left:230.60px;top:343.02px;font-size:8.3px;color:#ffffff;font-weight:normal;transform:scaleX(0.9265);transform-origin:0 0;">Sales &amp; Marketing</div>
<div class="t" style="left:301.98px;top:343.02px;font-size:8.3px;color:#ffffff;font-weight:normal;transform:scaleX(0.8628);transform-origin:0 0;">$28.940.000</div>
<div class="t" style="left:355.14px;top:343.02px;font-size:8.3px;color:#ffffff;font-weight:normal;transform:scaleX(0.8587);transform-origin:0 0;">$71.106</div>
<div class="t" style="left:400.80px;top:343.02px;font-size:8.3px;color:#ffffff;font-weight:normal;transform:scaleX(0.8016);transform-origin:0 0;">407</div>
<div class="t" style="left:423.10px;top:343.02px;font-size:8.3px;color:#ffffff;font-weight:normal;transform:scaleX(0.8715);transform-origin:0 0;">4.320</div>
<div class="t" style="left:488.60px;top:343.02px;font-size:8.3px;color:#ffffff;font-weight:normal;transform:scaleX(0.8915);transform-origin:0 0;">4,01</div>
<div class="a" style="left:298px;top:354.3px;width:10.23px;height:10.8px;background:#2f2639;"></div>
<div class="a" style="left:345.7px;top:354.3px;width:8.19px;height:10.8px;background:#3f1483;"></div>
<div class="a" style="left:384.6px;top:354.3px;width:24.21px;height:10.8px;background:#2f2639;"></div>
<div class="a" style="left:415.8px;top:354.3px;width:21.86px;height:10.8px;background:#3f1483;"></div>
<div class="t" style="left:230.60px;top:356.37px;font-size:8.3px;color:#6a5e78;font-weight:normal;transform:scaleX(0.7925);transform-origin:0 0;">HR</div>
<div class="t" style="left:301.98px;top:356.37px;font-size:8.3px;color:#6a5e78;font-weight:normal;transform:scaleX(0.8628);transform-origin:0 0;">$27.230.000</div>
<div class="t" style="left:355.14px;top:356.37px;font-size:8.3px;color:#6a5e78;font-weight:normal;transform:scaleX(0.8587);transform-origin:0 0;">$75.429</div>
<div class="t" style="left:400.80px;top:356.37px;font-size:8.3px;color:#6a5e78;font-weight:normal;transform:scaleX(0.8016);transform-origin:0 0;">361</div>
<div class="t" style="left:423.10px;top:356.37px;font-size:8.3px;color:#6a5e78;font-weight:normal;transform:scaleX(0.8715);transform-origin:0 0;">3.718</div>
<div class="t" style="left:488.60px;top:356.37px;font-size:8.3px;color:#6a5e78;font-weight:normal;transform:scaleX(0.8915);transform-origin:0 0;">3,83</div>
<div class="a" style="left:298px;top:367.65px;width:9.77px;height:3.35px;background:#2f2639;"></div>
<div class="a" style="left:345.7px;top:367.65px;width:7.6px;height:3.35px;background:#3f1483;"></div>
<div class="a" style="left:384.6px;top:367.65px;width:25.49px;height:3.35px;background:#2f2639;"></div>
<div class="a" style="left:415.8px;top:367.65px;width:21.17px;height:3.35px;background:#3f1483;"></div>
<div class="a" style="left:509.8px;top:256.5px;width:4.2px;height:109.3px;background:#e8e6e4;"></div>
<div class="a" style="left:510.5px;top:264px;width:2.8px;height:92px;background:#d4d2d0;"></div>
<svg class="a" style="left:510px;top:257px;" width="4" height="4" viewBox="0 0 4 4"><path d="M0.8 3l1.2-1.5l1.2 1.5" fill="none" stroke="#605e5c" stroke-width="0.6"/></svg>
<svg class="a" style="left:510px;top:361px;" width="4" height="4" viewBox="0 0 4 4"><path d="M0.8 1l1.2 1.5l1.2-1.5" fill="none" stroke="#605e5c" stroke-width="0.6"/></svg>
<svg class="a" style="left:6px;top:114px;" width="12" height="11" viewBox="0 0 12 11"><g fill="#6f6e6d"><rect x="1" y="1" width="1.3" height="9"/><rect x="1" y="8.8" width="10" height="1.3"/><rect x="3" y="2.5" width="2" height="7"/><rect x="5.6" y="5" width="2" height="4.5"/><rect x="8.2" y="1.5" width="2.2" height="8"/></g></svg>
<svg class="a" style="left:6px;top:139px;" width="12" height="12" viewBox="0 0 12 12"><rect x="1.5" y="1.5" width="9.5" height="9.5" fill="none" stroke="#8a8886" stroke-width="1"/><path d="M1.5 4.5h9.5M1.5 7.5h9.5M4.7 1.5v9.5M7.9 1.5v9.5" stroke="#8a8886" stroke-width="0.8"/></svg>
<svg class="a" style="left:5px;top:165px;" width="14" height="15" viewBox="0 0 14 15"><rect x="1" y="5.5" width="5" height="4" fill="none" stroke="#8a8886" stroke-width="1"/><rect x="8" y="1" width="5" height="4" fill="none" stroke="#8a8886" stroke-width="1"/><rect x="8" y="7.5" width="5" height="3" fill="none" stroke="#8a8886" stroke-width="1"/><rect x="8" y="10.5" width="5" height="3.5" fill="none" stroke="#8a8886" stroke-width="1"/><path d="M6 7.5h2M7 3v9h1M7 3h1" fill="none" stroke="#8a8886" stroke-width="0.9"/></svg>
<svg class="a" style="left:707px;top:115px;" width="10" height="9" viewBox="0 0 10 9"><path d="M4.5 1l-3.5 3.5l3.5 3.5M8.5 1l-3.5 3.5l3.5 3.5" fill="none" stroke="#3b3a39" stroke-width="0.9"/></svg>
<svg class="a" style="left:729px;top:115px;" width="10" height="9" viewBox="0 0 10 9"><path d="M4.5 1l-3.5 3.5l3.5 3.5M8.5 1l-3.5 3.5l3.5 3.5" fill="none" stroke="#3b3a39" stroke-width="0.9"/></svg>
<svg class="a" style="left:752.5px;top:115px;" width="10" height="9" viewBox="0 0 10 9"><path d="M4.5 1l-3.5 3.5l3.5 3.5M8.5 1l-3.5 3.5l3.5 3.5" fill="none" stroke="#3b3a39" stroke-width="0.9"/></svg>
<svg class="a" style="left:706px;top:132px;" width="12" height="12" viewBox="0 0 12 12"><path d="M9.8 2.3V9.6L6.9 6.6H3.3V5.3H6.9Z" fill="none" stroke="#3b3a39" stroke-width="0.9" stroke-linejoin="round"/></svg>
<div class="t" style="left:716.12px;top:149.10px;font-size:11.2px;color:#252423;transform:rotate(90deg) scaleX(0.8855);transform-origin:0 0;">Filters</div>
<div class="t" style="left:738.62px;top:133.20px;font-size:11.2px;color:#252423;transform:rotate(90deg) scaleX(0.9490);transform-origin:0 0;">Visualizations</div>
<div class="t" style="left:761.52px;top:133.40px;font-size:11.2px;color:#252423;transform:rotate(90deg) scaleX(0.9298);transform-origin:0 0;">Data</div>
<svg class="a" style="left:28px;top:380px;" width="5" height="7" viewBox="0 0 5 7"><path d="M3.5 1l-2 2.5l2 2.5" fill="none" stroke="#c8c6c4" stroke-width="1"/></svg>
<svg class="a" style="left:43px;top:380px;" width="5" height="7" viewBox="0 0 5 7"><path d="M1.5 1l2 2.5l-2 2.5" fill="none" stroke="#a19f9d" stroke-width="1"/></svg>
<div class="a" style="left:52px;top:372px;width:87px;height:23px;background:#ffffff;"></div>
<div class="a" style="left:52px;top:393px;width:87px;height:2px;background:#117865;"></div>
<div class="t" style="left:65.90px;top:378.99px;font-size:8.4px;color:#1b1a19;font-weight:normal;transform:scaleX(0.8807);transform-origin:0 0;">HR DASHBOARD</div>
<div class="a" style="left:139.7px;top:373px;width:25.8px;height:20.4px;background:#1b7a66;"></div>
<div class="a" style="left:148.9px;top:382.9px;width:7.8px;height:1.9px;background:#ffffff;"></div>
<div class="a" style="left:151.85px;top:380px;width:1.9px;height:7.7px;background:#ffffff;"></div>
<div class="t" style="left:1.60px;top:399.87px;font-size:7.6px;color:#605e5c;font-weight:normal;">Page 1 of 1</div>
<div class="a" style="left:621.8px;top:402.2px;width:2.7px;height:1px;background:#605e5c;"></div>
<div class="a" style="left:627.7px;top:402.3px;width:66.3px;height:0.8px;background:#8a8886;"></div>
<div class="a" style="left:643px;top:399.5px;width:3px;height:6.5px;background:#605e5c;"></div>
<div class="a" style="left:660.5px;top:401px;width:0.8px;height:3px;background:#8a8886;"></div>
<div class="a" style="left:698.8px;top:402.2px;width:4.2px;height:1px;background:#605e5c;"></div>
<div class="a" style="left:700.4px;top:400.6px;width:1px;height:4.2px;background:#605e5c;"></div>
<div class="t" style="left:714.50px;top:399.67px;font-size:7.6px;color:#484644;font-weight:normal;transform:scaleX(1.0322);transform-origin:0 0;">55%</div>
<svg class="a" style="left:742px;top:398px;" width="12" height="10" viewBox="0 0 12 10"><rect x="0.6" y="0.9" width="10.9" height="9" rx="1" fill="#8a8886"/><path d="M2.2 3.5L3.6 2.4H8.5L9.9 3.5V6.9L8.5 8.1H3.6L2.2 6.9Z" fill="#f3f2f1"/></svg>
<div class="a" style="left:0px;top:410px;width:25.4px;height:23px;background:#1f3c48;"></div>
<svg class="a" style="left:7px;top:417px;" width="10" height="10" viewBox="0 0 10 10"><g fill="#ffffff"><rect x="0" y="0.8" width="4.3" height="3.9"/><rect x="5" y="0" width="4.8" height="4.7"/><rect x="0" y="5.3" width="4.3" height="3.9"/><rect x="5" y="5.3" width="4.8" height="4.7"/></g></svg>
<div class="a" style="left:25.4px;top:410px;width:162.6px;height:23px;background:#f2f2f2;"></div>
<svg class="a" style="left:32px;top:417px;" width="10" height="10" viewBox="0 0 10 10"><circle cx="6" cy="4" r="3.2" fill="none" stroke="#333" stroke-width="1"/><path d="M3.7 6.3L0.8 9.2" stroke="#333" stroke-width="1.1"/></svg>
<div class="t" style="left:48.00px;top:418.76px;font-size:8.2px;color:#333333;font-weight:normal;transform:scaleX(0.9247);transform-origin:0 0;">Buscar</div>
<svg class="a" style="left:195px;top:416px;" width="12" height="11" viewBox="0 0 12 11"><path d="M1 1h10M1 10h10M2.5 3h6v5h-6z" fill="none" stroke="#d8d8d8" stroke-width="0.9"/><path d="M10.5 4v3" stroke="#d8d8d8" stroke-width="0.9"/></svg>
<svg class="a" style="left:222px;top:414px;" width="14" height="15" viewBox="0 0 14 15"><path d="M4 4.5q0-3.5 3-3.5t3 3.5" fill="none" stroke="#3a96dd" stroke-width="1"/><rect x="0.5" y="4" width="13" height="10.5" rx="1.5" fill="#f5f5f5"/><rect x="4.3" y="6.8" width="2.4" height="2.4" fill="#f25022"/><rect x="7.3" y="6.8" width="2.4" height="2.4" fill="#7fba00"/><rect x="4.3" y="9.8" width="2.4" height="2.4" fill="#00a4ef"/><rect x="7.3" y="9.8" width="2.4" height="2.4" fill="#ffb900"/></svg>
<svg class="a" style="left:250px;top:414px;" width="15" height="15" viewBox="0 0 15 15"><path d="M2 8.5h9.5q0-5-4.5-5t-4.5 5q0 5 4.5 5q3 0 4-2" fill="none" stroke="#1ba1e2" stroke-width="1.8"/><path d="M1 11q-2 3 1.5 3q4 0 11-8q2-4-1-3" fill="none" stroke="#f1c40f" stroke-width="0.9"/></svg>
<svg class="a" style="left:277px;top:415px;" width="15" height="14" viewBox="0 0 15 14"><path d="M0.5 2.5h5l1 1.5h8v9h-14z" fill="#f8c84a"/><rect x="0.5" y="5.5" width="14" height="8" fill="#ffd966"/><rect x="4" y="8" width="7" height="5.5" fill="#2b88d8"/></svg>
<div class="a" style="left:276px;top:431.5px;width:16px;height:1.5px;background:#76b9ed;"></div>
<svg class="a" style="left:305px;top:414px;" width="15" height="15" viewBox="0 0 15 15"><defs><linearGradient id="ed" x1="0" y1="0" x2="1" y2="1"><stop offset="0" stop-color="#35c1f1"/><stop offset="0.5" stop-color="#1e88d3"/><stop offset="1" stop-color="#0c59a4"/></linearGradient></defs><circle cx="7.5" cy="7.5" r="7" fill="url(#ed)"/><path d="M3 9q1-4 5-4q4 0 4 3h-6q0 3 4 3q2 0 4-1q-1 4-6 4q-4 0-5-5" fill="#50e6a6" opacity="0.9"/></svg>
<svg class="a" style="left:333px;top:415px;" width="15" height="13" viewBox="0 0 15 13"><path d="M3 1l11 2l-3 10l-10-2z" fill="#9fd8e8" stroke="#cfeff7" stroke-width="0.6"/><path d="M3 1l-2 10l2 1z" fill="#5a9fb5"/></svg>
<svg class="a" style="left:360px;top:414px;" width="16" height="16" viewBox="0 0 16 16"><circle cx="8" cy="8" r="7" fill="#db4437"/><path d="M8 8L1.9 4.5A7 7 0 0 1 14.1 4.5z" fill="#db4437"/><path d="M8 8L14.1 4.5A7 7 0 0 1 8 15z" fill="#f4b400"/><path d="M8 8L8 15A7 7 0 0 1 1.9 4.5z" fill="#0f9d58"/><circle cx="8" cy="8" r="3.2" fill="#fff"/><circle cx="8" cy="8" r="2.4" fill="#4285f4"/><path d="M9 9l5 5l-1 1.5l-4-3z" fill="#eee" stroke="#333" stroke-width="0.5"/></svg>
<div class="a" style="left:357px;top:431.5px;width:22px;height:1.5px;background:#76b9ed;"></div>
<div class="a" style="left:382px;top:410px;width:27px;height:23px;background:#43515b;"></div>
<svg class="a" style="left:388px;top:413px;" width="15" height="16" viewBox="0 0 15 16"><rect x="9.5" y="0.5" width="4.5" height="14.5" rx="0.7" fill="#f2c811"/><rect x="5.5" y="4.5" width="4.5" height="10.5" rx="0.7" fill="#e8b708"/><rect x="1.5" y="8.5" width="4.5" height="6.5" rx="0.7" fill="#d9a800"/></svg>
<div class="a" style="left:382px;top:431.5px;width:27px;height:1.5px;background:#76b9ed;"></div>
<svg class="a" style="left:414.5px;top:414.5px;" width="17" height="13" viewBox="0 0 17 13"><rect x="5" y="0.5" width="11.5" height="12" rx="1" fill="#2b7cd3"/><rect x="5" y="0.5" width="11.5" height="3" rx="1" fill="#41a5ee"/><rect x="0.5" y="2.5" width="9" height="8" rx="0.8" fill="#185abd"/><path d="M2 4.5l1.3 4.5l1.5-3.5l1.5 3.5l1.3-4.5" fill="none" stroke="#fff" stroke-width="0.8"/></svg>
<div class="a" style="left:411.5px;top:431.5px;width:22.5px;height:1.5px;background:#76b9ed;"></div>
<div class="a" style="left:765px;top:410px;width:1px;height:23px;background:#3a4660;"></div>
<svg class="a" style="left:654px;top:419px;" width="9" height="6" viewBox="0 0 9 6"><path d="M1 5l3.5-3.5l3.5 3.5" fill="none" stroke="#e0e0e0" stroke-width="0.9"/></svg>
<svg class="a" style="left:666px;top:417px;" width="12" height="10" viewBox="0 0 12 10"><path d="M2 8.5q-2 0-1.5-2.5q.5-2 2.5-2q1-3 4-3q3 0 3.5 3q2 0 2 2.5q0 2-2 2z" fill="#9aa3aa"/><path d="M1 1l10 9" stroke="#1d2a38" stroke-width="1.2"/><path d="M1.5 0.5l10 9" stroke="#cfd4d8" stroke-width="0.7"/></svg>
<div class="t" style="left:682.50px;top:414.38px;font-size:6.4px;color:#ffffff;font-weight:normal;transform:scaleX(0.8746);transform-origin:0 0;">ESP</div>
<div class="t" style="left:682.50px;top:423.38px;font-size:6.4px;color:#ffffff;font-weight:normal;transform:scaleX(0.9672);transform-origin:0 0;">LAA</div>
<div class="t" style="left:710.80px;top:414.38px;font-size:6.4px;color:#ffffff;font-weight:normal;transform:scaleX(0.9179);transform-origin:0 0;">12:51</div>
<div class="t" style="left:702.50px;top:423.38px;font-size:6.4px;color:#ffffff;font-weight:normal;transform:scaleX(1.0053);transform-origin:0 0;">12/03/2023</div>
<svg class="a" style="left:744px;top:416px;" width="16" height="14" viewBox="0 0 16 14"><path d="M1 1h11v8h-7l-2.5 2v-2h-1.5z" fill="#e8e8e8"/><path d="M3 3.5h7M3 5.5h7" stroke="#1d2a38" stroke-width="0.7"/><circle cx="11.5" cy="9.5" r="3.8" fill="#1d2a38" stroke="#e8e8e8" stroke-width="0.8"/><text x="11.5" y="11.6" font-size="5.5" font-family="Liberation Sans" font-weight="bold" fill="#fff" text-anchor="middle">2</text></svg>
</body></html>
